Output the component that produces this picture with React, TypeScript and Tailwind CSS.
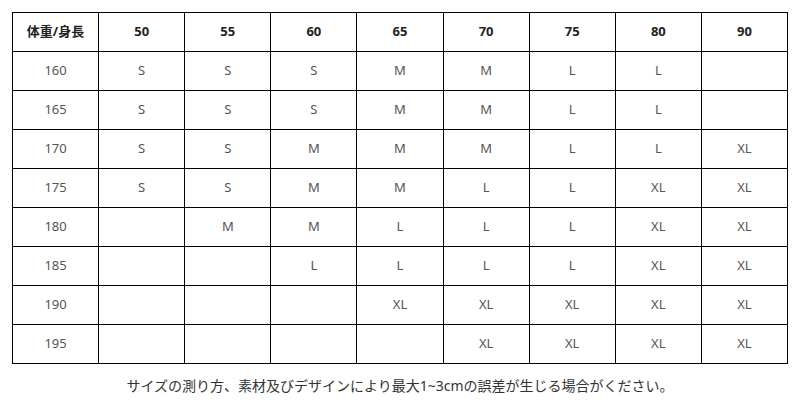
import React from "react";

const headers = ["体重/身長", "50", "55", "60", "65", "70", "75", "80", "90"];
const rows: string[][] = [
  ["160", "S", "S", "S", "M", "M", "L", "L", ""],
  ["165", "S", "S", "S", "M", "M", "L", "L", ""],
  ["170", "S", "S", "M", "M", "M", "L", "L", "XL"],
  ["175", "S", "S", "M", "M", "L", "L", "XL", "XL"],
  ["180", "", "M", "M", "L", "L", "L", "XL", "XL"],
  ["185", "", "", "L", "L", "L", "L", "XL", "XL"],
  ["190", "", "", "", "XL", "XL", "XL", "XL", "XL"],
  ["195", "", "", "", "", "XL", "XL", "XL", "XL"],
];

export default function App() {
  return (
    <div
      className="w-[800px] h-[410px] bg-white pt-[12px]"
      style={{ fontFamily: '"Noto Sans", "Noto Sans CJK JP", sans-serif' }}
    >
      <table className="ml-[12px] w-[776px] table-fixed border-collapse">
        <thead>
          <tr className="h-[39px]">
            {headers.map((h, i) => (
              <th
                key={i}
                className="border border-black p-0 text-center align-middle text-[13px] font-bold text-[#222]"
              >
                {h}
              </th>
            ))}
          </tr>
        </thead>
        <tbody>
          {rows.map((r, ri) => (
            <tr key={ri} className="h-[39px]">
              {r.map((c, ci) => (
                <td
                  key={ci}
                  className="border border-black p-0 text-center align-middle text-[13px] text-[#555]"
                >
                  {c}
                </td>
              ))}
            </tr>
          ))}
        </tbody>
      </table>
      <p className="mt-[12px] text-center text-[14px] leading-[20px] text-[#333]">
        サイズの測り方、素材及びデザインにより最大1~3cmの誤差が生じる場合がください。
      </p>
    </div>
  );
}
